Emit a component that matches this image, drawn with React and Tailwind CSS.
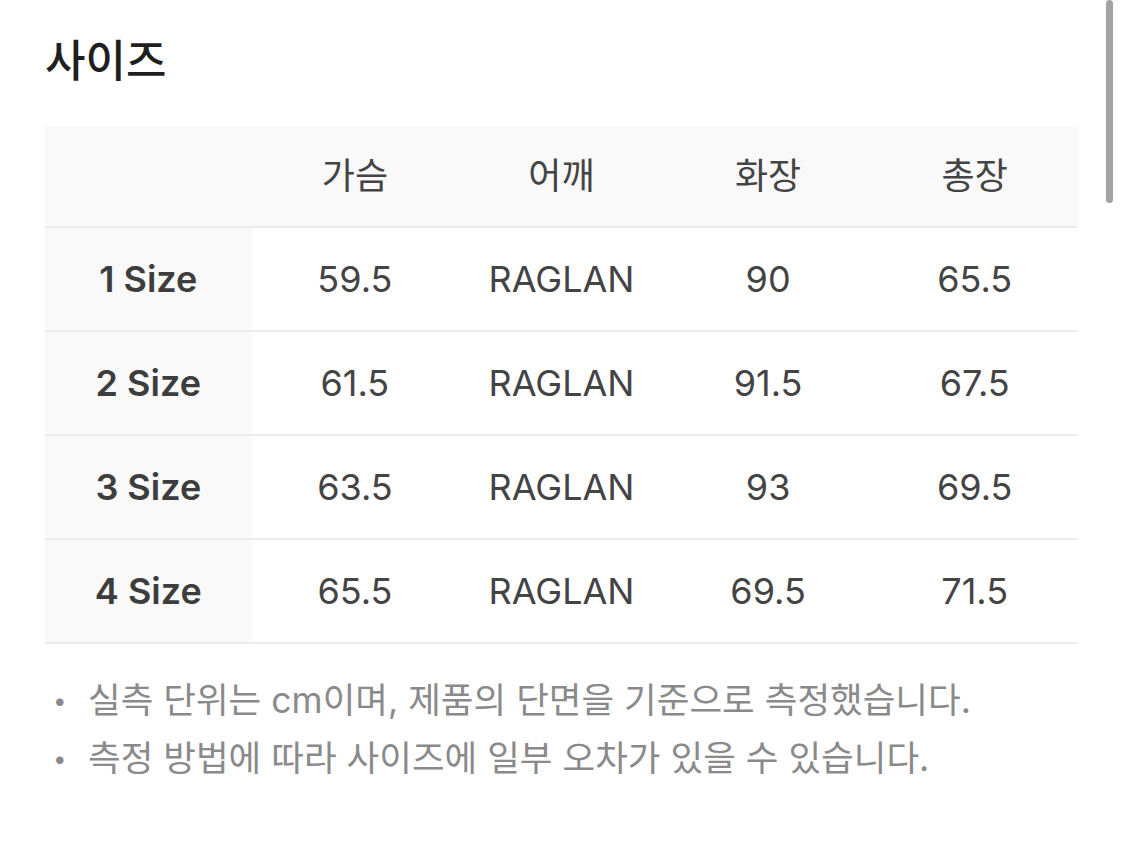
const FONT = "font-['Inter','Noto_Sans_CJK_KR',sans-serif]";

const headers = ["", "가슴", "어깨", "화장", "총장"];

const rows = [
  ["1 Size", "59.5", "RAGLAN", "90", "65.5"],
  ["2 Size", "61.5", "RAGLAN", "91.5", "67.5"],
  ["3 Size", "63.5", "RAGLAN", "93", "69.5"],
  ["4 Size", "65.5", "RAGLAN", "69.5", "71.5"],
];

const notes = [
  "실측 단위는 cm이며, 제품의 단면을 기준으로 측정했습니다.",
  "측정 방법에 따라 사이즈에 일부 오차가 있을 수 있습니다.",
];

export default function App() {
  return (
    <div className={`relative w-[1125px] h-[852px] bg-white overflow-hidden ${FONT}`}>
      {/* scrollbar */}
      <div className="absolute right-[12px] top-0 w-[7px] h-[203px] rounded-full bg-[#a3a3a3]" />

      <div className="pl-[45px] pr-[47px] pt-[32px]">
        <h1 className="text-[44px] leading-[58px] font-medium text-[#1f1f1f]">사이즈</h1>

        <div className="mt-[36px]">
          <div className="grid grid-cols-5 h-[100px] bg-[#f9f9f9] border-b-2 border-[#ececec] box-content">
            {headers.map((h, i) => (
              <div key={i} className="flex items-center justify-center text-[36px] text-[#444]">
                {h}
              </div>
            ))}
          </div>

          {rows.map((r, i) => (
            <div key={i} className="grid grid-cols-5 h-[102px] border-b-2 border-[#ececec] box-content">
              {r.map((c, j) => (
                <div
                  key={j}
                  className={
                    j === 0
                      ? "flex items-center justify-center bg-[#f9f9f9] text-[36px] font-semibold text-[#3d3d3d]"
                      : "flex items-center justify-center text-[36px] text-[#444]"
                  }
                >
                  {c}
                </div>
              ))}
            </div>
          ))}
        </div>

        <ul className="mt-[37px] flex flex-col gap-[18px]">
          {notes.map((n, i) => (
            <li key={i} className="flex items-center text-[35.5px] leading-[40px] text-[#8a8a8a]">
              <span className="w-[43px] pl-[8px] text-[24px]">•</span>
              <span>{n}</span>
            </li>
          ))}
        </ul>
      </div>
    </div>
  );
}
